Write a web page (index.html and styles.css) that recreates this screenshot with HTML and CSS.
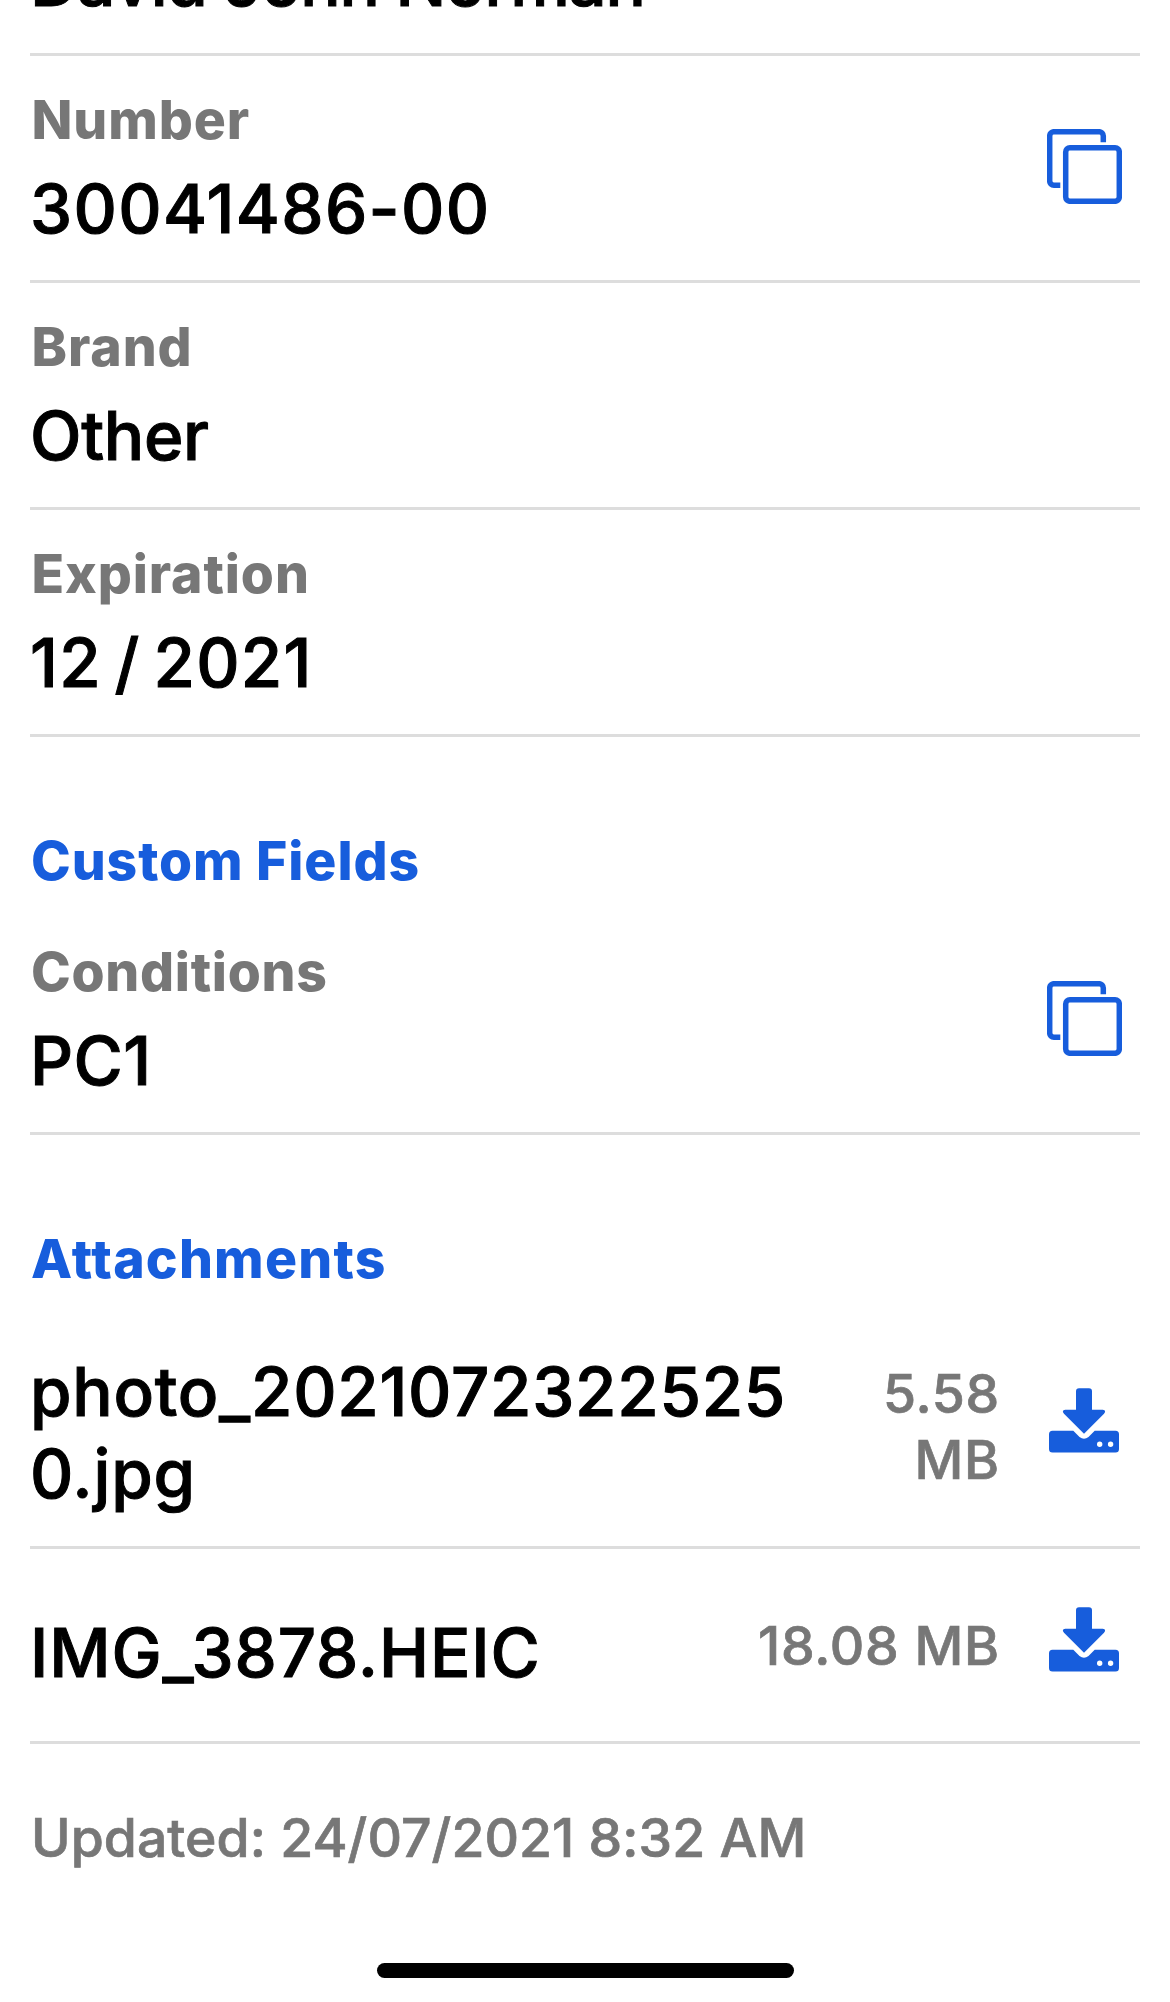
FILE: index.html
```html
<!DOCTYPE html>
<html lang="en">
<head>
<meta charset="utf-8">
<title>Card details</title>
<link rel="stylesheet" href="styles.css">
</head>
<body>
<svg class="sprite" aria-hidden="true">
  <symbol id="copy" viewBox="0 0 75 75">
    <g fill="none" stroke="currentColor" stroke-width="5.5">
      <path d="M56.3 13.3V6.9a4.2 4.2 0 0 0-4.2-4.2H6.9a4.2 4.2 0 0 0-4.2 4.2v45.2a4.2 4.2 0 0 0 4.2 4.2h6.4"/>
      <rect x="18.7" y="18.7" width="53.6" height="53.6" rx="4.2"/>
    </g>
  </symbol>
  <symbol id="download" viewBox="0 0 70 65">
    <path fill="currentColor" d="M30 .3h10q3 0 3 3v18.400h10.800q4 .4 1.200 4L35 45.700 15 25.700q-2.800-3.600 1.200-4H27V3.300q0-3 3-3z"/>
    <path fill="currentColor" fill-rule="evenodd" d="M3.500 42.800H24.300L30.500 49q4.500 3.600 9 0l6.200-6.200H66.500q3.500 0 3.500 3.500v14.700q0 3.500-3.500 3.500H3.500q-3.500 0-3.500-3.500V46.300q0-3.500 3.500-3.500zM48 56.300a2.700 2.700 0 1 0 5.400 0 2.700 2.700 0 1 0-5.400 0zM58.900 56.300a2.700 2.700 0 1 0 5.400 0 2.700 2.700 0 1 0-5.400 0z"/>
  </symbol>
</svg>

<main class="details">
  <div class="field field--name">
    <div class="value name">David John Norman</div>
  </div>
  <div class="field">
    <div>
      <div class="label">Number</div>
      <div class="value number">30041486-00</div>
    </div>
    <svg class="copy-icon" role="img" aria-label="Copy"><use href="#copy"/></svg>
  </div>
  <div class="field">
    <div>
      <div class="label">Brand</div>
      <div class="value">Other</div>
    </div>
  </div>
  <div class="field">
    <div>
      <div class="label">Expiration</div>
      <div class="value expiry">12 / 2021</div>
    </div>
  </div>

  <h2 class="section-title">Custom Fields</h2>
  <div class="field">
    <div>
      <div class="label conditions">Conditions</div>
      <div class="value code">PC1</div>
    </div>
    <svg class="copy-icon" role="img" aria-label="Copy"><use href="#copy"/></svg>
  </div>

  <h2 class="section-title attachments-title">Attachments</h2>
  <div class="attachment attachment--tall">
    <div class="value filename">photo_20210723225250.jpg</div>
    <div class="size">5.58 MB</div>
    <svg class="download-icon" role="img" aria-label="Download"><use href="#download"/></svg>
  </div>
  <div class="attachment attachment--short">
    <div class="value filename">IMG_3878.HEIC</div>
    <div class="size">18.08 MB</div>
    <svg class="download-icon" role="img" aria-label="Download"><use href="#download"/></svg>
  </div>

  <p class="updated">Updated: 24/07/2021 8:32 AM</p>
</main>
<div class="home-indicator"></div>
</body>
</html>
```
FILE: styles.css
```css
* {
  box-sizing: border-box;
}

body {
  margin: 0;
  height: 2002px;
  display: flex;
  flex-direction: column;
  overflow: hidden;
  background: #fff;
  color: #000;
  font-family: Inter, "Liberation Sans", sans-serif;
}

.sprite {
  display: none;
}

.details {
  padding: 0 30px;
}

.field {
  display: flex;
  justify-content: space-between;
  height: 227px;
  padding: 31px 18px 0 0;
  border-bottom: 3px solid #ddd;
}

.field--name {
  height: 56px;
  padding-top: 0;
}

.label,
.section-title {
  font-size: 53.5px;
  line-height: 66px;
  font-weight: 800;
  letter-spacing: 0.9px;
  white-space: nowrap;
}

.label {
  padding-left: 1.5px;
  color: #777;
}

.conditions {
  padding-left: 1px;
  letter-spacing: 0.7px;
}

.value {
  margin-top: 15px;
  font-size: 67.2px;
  line-height: 82px;
  font-weight: 500;
  letter-spacing: -0.3px;
  white-space: nowrap;
  -webkit-text-stroke: 1px currentColor;
}

.name {
  margin-top: -59px;
  letter-spacing: -1.19px;
}

.number {
  letter-spacing: 1.35px;
}

.expiry {
  letter-spacing: 1.3px;
  word-spacing: -6.5px;
}

.code {
  letter-spacing: 0.4px;
}

.copy-icon {
  width: 75px;
  height: 75px;
  margin-top: 42px;
  color: #175ddc;
}

.section-title {
  height: 80px;
  margin: 91px 0 0;
  padding-left: 1px;
  color: #175ddc;
}

.attachments-title {
  height: 125px;
  letter-spacing: 1.2px;
}

.attachment {
  display: flex;
  align-items: flex-start;
  padding-right: 21px;
  border-bottom: 3px solid #ddd;
}

.attachment--tall {
  height: 198px;
}

.attachment--short {
  height: 195px;
  padding-top: 21px;
}

.filename {
  width: 760px;
  margin-top: 0;
  letter-spacing: 0.76px;
  overflow-wrap: anywhere;
  white-space: normal;
}

.attachment--short .filename {
  width: auto;
  margin-top: 42px;
  letter-spacing: 0.9px;
}

.size {
  width: 190px;
  margin: 10px 0 0 auto;
  color: #777;
  font-size: 53.5px;
  line-height: 65.5px;
  font-weight: 500;
  letter-spacing: 0.75px;
  text-align: right;
  -webkit-text-stroke: 0.7px currentColor;
}

.attachment--short .size {
  width: auto;
  margin-top: 43px;
}

.download-icon {
  width: 70px;
  height: 65px;
  margin: 36.5px 0 0 49px;
  color: #175ddc;
}

.updated {
  margin: 61px 0 0 1px;
  color: #777;
  font-size: 53.5px;
  line-height: 66px;
  font-weight: 500;
  letter-spacing: 0.05px;
  -webkit-text-stroke: 0.7px currentColor;
}

.home-indicator {
  width: 417px;
  height: 15px;
  margin: auto auto 24px 377px;
  border-radius: 8px;
  background: #000;
}
```
